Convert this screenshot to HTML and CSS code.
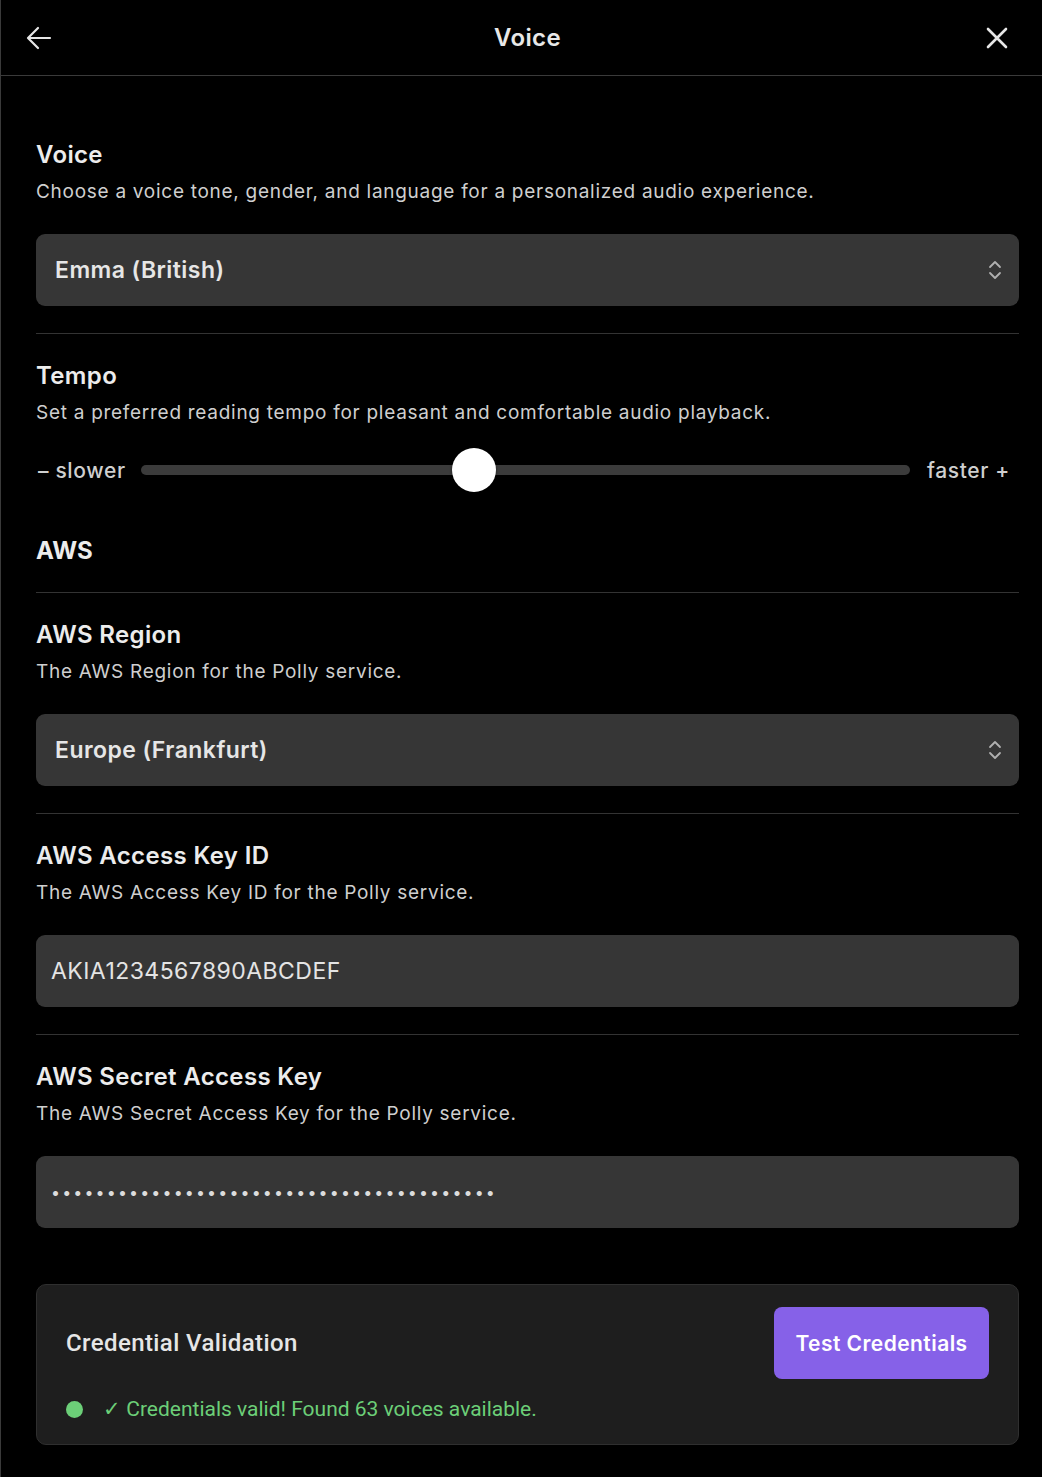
FILE: index.html
```html
<!DOCTYPE html>
<html>
<head>
<meta charset="utf-8">
<link rel="stylesheet" href="styles.css">
</head>
<body>
<div class="page">
  <header class="topbar">
    <button class="icon-btn" aria-label="Back">
      <svg width="26" height="24" viewBox="0 0 26 24" fill="none" stroke="#e6e6e6" stroke-width="2.2" stroke-linecap="round" stroke-linejoin="round"><path d="M24 12H2.5M12 2L2 12l10 10"/></svg>
    </button>
    <h1 class="topbar-title">Voice</h1>
    <button class="icon-btn" aria-label="Close">
      <svg width="22" height="22" viewBox="0 0 22 22" fill="none" stroke="#e6e6e6" stroke-width="2.6" stroke-linecap="round"><path d="M2 2l18 18M20 2L2 20"/></svg>
    </button>
  </header>

  <main class="content">
    <section class="section bordered">
      <h2 class="title">Voice</h2>
      <p class="desc">Choose a voice tone, gender, and language for a personalized audio experience.</p>
      <div class="select">
        <span>Emma (British)</span>
        <svg class="chev" width="14" height="20" viewBox="0 0 14 20" fill="none" stroke="#b0b0b0" stroke-width="1.8" stroke-linecap="round" stroke-linejoin="round"><path d="M2 7l5-5 5 5M2 13l5 5 5-5"/></svg>
      </div>
    </section>

    <section class="section">
      <h2 class="title">Tempo</h2>
      <p class="desc">Set a preferred reading tempo for pleasant and comfortable audio playback.</p>
      <div class="slider-row">
        <span class="slider-label">– slower</span>
        <div class="track">
          <div class="thumb" style="left: 43.3%"></div>
        </div>
        <span class="slider-label">faster +</span>
      </div>
    </section>

    <div class="group-head">AWS</div>

    <section class="section bordered">
      <h2 class="title">AWS Region</h2>
      <p class="desc">The AWS Region for the Polly service.</p>
      <div class="select">
        <span>Europe (Frankfurt)</span>
        <svg class="chev" width="14" height="20" viewBox="0 0 14 20" fill="none" stroke="#b0b0b0" stroke-width="1.8" stroke-linecap="round" stroke-linejoin="round"><path d="M2 7l5-5 5 5M2 13l5 5 5-5"/></svg>
      </div>
    </section>

    <section class="section bordered">
      <h2 class="title">AWS Access Key ID</h2>
      <p class="desc">The AWS Access Key ID for the Polly service.</p>
      <div class="input">AKIA1234567890ABCDEF</div>
    </section>

    <section class="section">
      <h2 class="title">AWS Secret Access Key</h2>
      <p class="desc">The AWS Secret Access Key for the Polly service.</p>
      <div class="input password">••••••••••••••••••••••••••••••••••••••••</div>
    </section>

    <div class="card">
      <div class="card-row">
        <h3 class="card-title">Credential Validation</h3>
        <button class="btn">Test Credentials</button>
      </div>
      <div class="status">
        <span class="dot"></span>
        <span class="status-text">✓ Credentials valid! Found 63 voices available.</span>
      </div>
    </div>
  </main>
</div>
</body>
</html>
```

FILE: styles.css
```css
* { box-sizing: border-box; }
html, body {
  margin: 0;
  padding: 0;
  background: #000;
}
body {
  font-family: Inter, "Noto Sans", "Liberation Sans", sans-serif;
  color: #e8e8e8;
}
.page {
  min-height: 1477px;
  border-left: 1px solid #3a3a3a;
}
.topbar {
  height: 76px;
  border-bottom: 1px solid #3a3a3a;
  display: flex;
  align-items: center;
  justify-content: space-between;
  padding: 0 34px 0 25px;
}
.icon-btn {
  background: none;
  border: 0;
  padding: 0;
  display: flex;
  align-items: center;
  cursor: pointer;
}
.topbar-title {
  margin: 0 0 0 17px;
  font-size: 24px;
  font-weight: 600;
  color: #e8e8e8;
  letter-spacing: 0.4px;
}
.content {
  padding: 37px 23px 31px 35px;
}
.section {
  padding: 27px 0;
}
.section.bordered {
  border-bottom: 1px solid #333;
}
.title {
  margin: 0;
  font-size: 24px;
  line-height: 30px;
  font-weight: 600;
  color: #ececec;
  letter-spacing: 0.35px;
}
.desc {
  margin: 9px 0 0;
  font-size: 19px;
  line-height: 26px;
  color: #cfcfcf;
  letter-spacing: 0.72px;
}
.select, .input {
  margin-top: 29px;
  height: 72px;
  background: #363636;
  border-radius: 9px;
  display: flex;
  align-items: center;
}
.select {
  justify-content: space-between;
  padding: 0 17px 0 19px;
  font-size: 23px;
  font-weight: 600;
  color: #e6e6e6;
  letter-spacing: 0.45px;
}
.input {
  padding: 0 15px;
  font-size: 23px;
  color: #e4e4e4;
  letter-spacing: 0.45px;
}
.input.password {
  font-size: 16px;
  letter-spacing: 2.15px;
  padding-left: 15px;
  color: #dcdcdc;
}
.slider-row {
  margin-top: 22px;
  height: 44px;
  display: flex;
  align-items: center;
  gap: 15px;
  padding-right: 9px;
}
.slider-label {
  font-size: 21px;
  font-weight: 500;
  color: #cfcfcf;
  white-space: nowrap;
  letter-spacing: 0.65px;
  padding-left: 2px;
}
.track {
  flex: 1;
  height: 10px;
  border-radius: 5px;
  background: #3b3b3b;
  position: relative;
}
.thumb {
  position: absolute;
  top: 50%;
  width: 44px;
  height: 44px;
  margin: -22px 0 0 -22px;
  border-radius: 50%;
  background: #fff;
  box-shadow: 0 1px 3px rgba(0,0,0,0.5);
}
.group-head {
  padding: 17px 0 26px;
  font-size: 24px;
  line-height: 30px;
  font-weight: 700;
  color: #ececec;
  border-bottom: 1px solid #333;
}
.card {
  margin-top: 29px;
  background: #1e1e1e;
  border: 1px solid #2f2f2f;
  border-radius: 10px;
  padding: 22px 29px 22px 29px;
  font-family: Roboto, "Liberation Sans", sans-serif;
}
.card-row {
  display: flex;
  align-items: center;
  justify-content: space-between;
}
.card-title {
  margin: 0;
  font-size: 24px;
  font-weight: 500;
  color: #e6e6e6;
  letter-spacing: 0.4px;
}
.btn {
  height: 72px;
  width: 215px;
  border: 0;
  border-radius: 8px;
  background: #8661e8;
  color: #fff;
  font-family: Inter, "Liberation Sans", sans-serif;
  font-size: 21px;
  font-weight: 600;
  letter-spacing: 0.45px;
  cursor: pointer;
}
.status {
  margin-top: 17px;
  display: flex;
  align-items: center;
  gap: 20px;
  height: 26px;
}
.dot {
  width: 17px;
  height: 17px;
  border-radius: 50%;
  background: #6ccf78;
}
.status-text {
  font-size: 21px;
  color: #6ccf78;
}
```
